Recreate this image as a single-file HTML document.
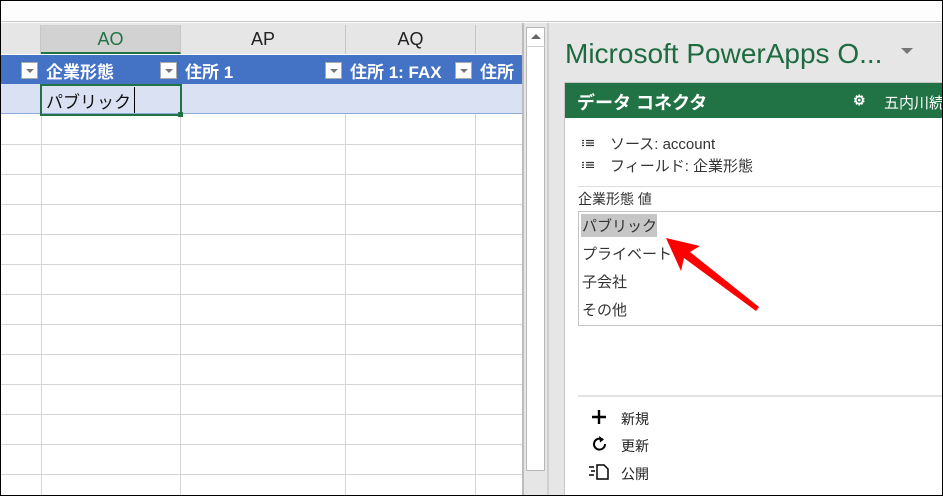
<!DOCTYPE html>
<html><head><meta charset="utf-8"><style>
*{margin:0;padding:0;box-sizing:border-box}
body{width:943px;height:496px;overflow:hidden;position:relative;background:#fff;font-family:"Liberation Sans","Noto Sans CJK JP",sans-serif;}
.a{position:absolute}
.frame{position:absolute;left:0;top:0;width:943px;height:496px;border:1px solid #000;pointer-events:none;z-index:50}
.hl{position:absolute;left:0;width:522px;height:1px;background:#d4d4d4}
.vl{position:absolute;top:114px;width:1px;height:382px;background:#d4d4d4}
.dd{position:absolute;top:62px;width:17px;height:17px;background:#fff;border:1px solid #aaa}
.dd:after{content:"";position:absolute;left:4px;top:6px;border-left:4px solid transparent;border-right:4px solid transparent;border-top:4px solid #777}
.hd{position:absolute;top:58px;color:#fff;font-weight:bold;font-size:17px}
.ch{position:absolute;top:25px;height:29px;font-size:18px;color:#222;text-align:center;line-height:29px;border-right:1px solid #c6c6c6}
.t{position:absolute;font-size:15px;color:#333}
</style></head><body>
<div class="frame"></div>
<div class="a" style="left:0;top:0;width:943px;height:22px;background:#fdfdfd;border-bottom:1px solid #c8c8c8"></div>
<div class="a" style="left:0;top:23px;width:943px;height:473px;background:#e6e6e6"></div>
<div class="a" style="left:0;top:54px;width:522px;height:442px;background:#fff"></div>
<div class="ch" style="left:0;width:41px"></div>
<div class="ch" style="left:41px;width:140px;background:#d2d2d2;color:#217346;border-bottom:2px solid #217346">AO</div>
<div class="ch" style="left:181px;width:165px">AP</div>
<div class="ch" style="left:346px;width:130px">AQ</div>
<div class="ch" style="left:476px;width:46px;border:none"></div>
<div class="a" style="left:0;top:55px;width:522px;height:29px;background:#4472c4"></div>
<div class="a" style="left:0;top:84px;width:522px;height:30px;background:#d9e1f2;border-bottom:1px solid #8eaadb"></div>
<div class="dd" style="left:21px"></div><div class="hd" style="left:46px">企業形態</div>
<div class="dd" style="left:160px"></div><div class="hd" style="left:185px">住所 1</div>
<div class="dd" style="left:325px"></div><div class="hd" style="left:350px">住所 1: FAX</div>
<div class="dd" style="left:455px"></div><div class="hd" style="left:480px">住所</div>
<div class="hl" style="top:144px"></div><div class="hl" style="top:174px"></div><div class="hl" style="top:204px"></div><div class="hl" style="top:234px"></div><div class="hl" style="top:264px"></div><div class="hl" style="top:294px"></div><div class="hl" style="top:324px"></div><div class="hl" style="top:354px"></div><div class="hl" style="top:384px"></div><div class="hl" style="top:414px"></div><div class="hl" style="top:444px"></div><div class="hl" style="top:474px"></div>
<div class="vl" style="left:41px"></div><div class="vl" style="left:180px"></div><div class="vl" style="left:345px"></div><div class="vl" style="left:475px"></div>
<div class="a" style="left:40px;top:84px;width:142px;height:32px;border:2px solid #217346"></div>
<div class="a" style="left:178px;top:112px;width:5px;height:5px;background:#217346"></div>
<div class="a" style="left:134px;top:87px;width:1px;height:26px;background:#000"></div>
<div class="t" style="left:46px;top:88px;font-size:17px;color:#111">パブリック</div>
<div class="a" style="left:522px;top:23px;width:2px;height:473px;background:#bcbcbc"></div>
<div class="a" style="left:524px;top:23px;width:24px;height:473px;background:#e6e6e6"></div>
<div class="a" style="left:526px;top:27px;width:19px;height:444px;background:#fff;border:1px solid #b8b8b8"></div>
<div class="a" style="left:531px;top:34px;border-left:5px solid transparent;border-right:5px solid transparent;border-bottom:5px solid #666"></div>
<div class="a" style="left:526px;top:46px;width:19px;height:1px;background:#d0d0d0"></div>
<div class="a" style="left:547px;top:23px;width:2px;height:473px;background:#cfcfcf"></div>
<div class="a" style="left:565px;top:38px;font-size:28px;color:#1e6b40;white-space:nowrap">Microsoft PowerApps O...</div>
<div class="a" style="left:901px;top:48px;border-left:6px solid transparent;border-right:6px solid transparent;border-top:6px solid #777"></div>
<div class="a" style="left:564px;top:82px;width:379px;height:414px;background:#fff;border:1px solid #c6c6c6"></div>
<div class="a" style="left:565px;top:83px;width:378px;height:35px;background:#217346"></div>
<div class="a" style="left:577px;top:89px;color:#fff;font-weight:bold;font-size:18px">データ コネクタ</div>
<div class="a" style="left:853px;top:92px;color:#fff;font-size:14px;font-weight:bold">⚙</div>
<div class="a" style="left:884px;top:92px;color:#fff;font-size:15px;white-space:nowrap">五内川続</div>
<svg class="a" style="left:582px;top:138px" width="14" height="30"><g stroke="#333" stroke-width="1.2"><path d="M0 2.5h2M4 2.5h8M0 5h2M4 5h8M0 7.5h2M4 7.5h8M0 24.5h2M4 24.5h8M0 27h2M4 27h8M0 29.5h2M4 29.5h8"/></g></svg>
<div class="t" style="left:610px;top:133px">ソース: account</div>
<div class="t" style="left:610px;top:155px">フィールド: 企業形態</div>
<div class="a" style="left:578px;top:186px;width:365px;height:1px;background:#ddd"></div>
<div class="t" style="left:578px;top:189px;font-size:14px">企業形態 値</div>
<div class="a" style="left:578px;top:211px;width:366px;height:115px;border:1px solid #c4c4c4"></div>
<div class="a" style="left:581px;top:214px;width:76px;height:23px;background:#c6c6c6"></div>
<div class="t" style="left:582px;top:215px">パブリック</div>
<div class="t" style="left:582px;top:243px">プライベート</div>
<div class="t" style="left:582px;top:271px">子会社</div>
<div class="t" style="left:582px;top:299px">その他</div>
<svg class="a" style="left:655px;top:230px" width="115" height="90"><g fill="#f00"><path d="M11 8 L45 16 L35 22 L104 77 L101 81 L29 28 L26 41 Z"/></g></svg>
<div class="a" style="left:578px;top:395px;width:365px;height:2px;background:#e2e2e2"></div>
<svg class="a" style="left:592px;top:410px" width="14" height="14"><path d="M7 0v14M0 7h14" stroke="#000" stroke-width="2.4"/></svg>
<div class="t" style="left:621px;top:409px;font-size:14px;color:#222">新規</div>
<svg class="a" style="left:592px;top:436px" width="15" height="16"><path d="M10.5 3.5A5.5 5.5 0 1 0 13 8" stroke="#000" stroke-width="2" fill="none"/><path d="M7 0l5 3.5-4 3z" fill="#000"/></svg>
<div class="t" style="left:621px;top:436px;font-size:14px;color:#222">更新</div>
<svg class="a" style="left:588px;top:463px" width="24" height="18"><g stroke="#000" stroke-width="1.5" fill="none"><path d="M1 4h5M3 8h4M1 12h5"/><path d="M9 2h7l4 4v10H9z"/></g></svg>
<div class="t" style="left:621px;top:464px;font-size:14px;color:#222">公開</div>
</body></html>
